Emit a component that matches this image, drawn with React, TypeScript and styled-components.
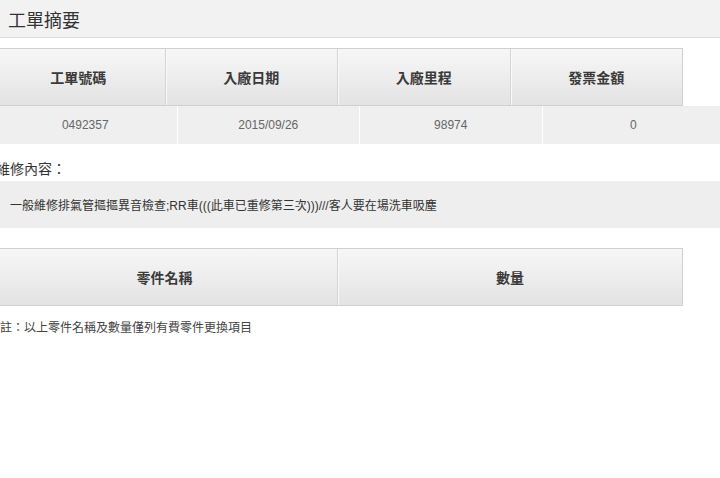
import React from "react";
import styled, { createGlobalStyle } from "styled-components";

const Global = createGlobalStyle`
  html, body { margin: 0; padding: 0; background: #fff; }
  body { font-family: "Liberation Sans", Arial, "Noto Sans CJK TC", sans-serif; color: #333; overflow: hidden; }
`;

const Page = styled.div`
  width: 720px;
  height: 478px;
  overflow: hidden;
  display: flex;
  flex-direction: column;
`;

const TitleBar = styled.div`
  height: 37px;
  background: #f2f2f2;
  border-bottom: 1px solid #dcdcdc;
  display: flex;
  align-items: center;
  padding-left: 8px;
  font-size: 18px;
  color: #333;
  font-family: "Noto Sans CJK TC", sans-serif;
  margin-bottom: 10px;
`;

const HeadRow = styled.div<{ cols: number; w: number }>`
  display: grid;
  grid-template-columns: repeat(${(p) => p.cols}, 1fr);
  width: ${(p) => p.w}px;
  margin-left: -8px;
  height: 58px;
  border: 1px solid #d0d0d0;
  border-left: none;
  box-sizing: border-box;
  background: linear-gradient(#f7f7f7, #e3e3e3);
`;

const HeadCell = styled.div`
  display: flex;
  align-items: center;
  justify-content: center;
  font-weight: bold;
  font-size: 14px;
  color: #3a3a3a;
  font-family: "Noto Sans CJK TC", sans-serif;
  & + & { border-left: 1px solid #d4d4d4; box-shadow: inset 1px 0 0 #fafafa; }
`;

const DataRow = styled.div`
  display: grid;
  grid-template-columns: repeat(4, 1fr);
  width: 730px;
  margin-left: -6px;
  height: 38px;
`;

const DataCell = styled.div`
  display: flex;
  align-items: center;
  justify-content: center;
  background: #efefef;
  font-size: 12px;
  color: #666;
  & + & { border-left: 1px solid #fff; }
`;

const Label = styled.div`
  margin: 14px 0 0 -4px;
  font-size: 14px;
  color: #333;
  font-family: "Noto Sans CJK TC", sans-serif;
  height: 20px;
  line-height: 20px;
`;

const ContentBox = styled.div`
  margin-top: 3px;
  height: 47px;
  background: #eeeeee;
  display: flex;
  align-items: center;
  padding-left: 10px;
  font-size: 12px;
  color: #333;
  font-family: "Liberation Sans", "Noto Sans CJK TC", sans-serif;
  margin-bottom: 20px;
`;

const Note = styled.div`
  margin-top: 12px;
  font-size: 12px;
  color: #444;
  font-family: "Noto Sans CJK TC", sans-serif;
`;

export default function App() {
  return (
    <Page>
      <Global />
      <TitleBar>工單摘要</TitleBar>
      <HeadRow cols={4} w={691}>
        <HeadCell>工單號碼</HeadCell>
        <HeadCell>入廠日期</HeadCell>
        <HeadCell>入廠里程</HeadCell>
        <HeadCell>發票金額</HeadCell>
      </HeadRow>
      <DataRow>
        <DataCell>0492357</DataCell>
        <DataCell>2015/09/26</DataCell>
        <DataCell>98974</DataCell>
        <DataCell>0</DataCell>
      </DataRow>
      <Label>維修內容：</Label>
      <ContentBox>一般維修排氣管摳摳異音檢查;RR車(((此車已重修第三次)))///客人要在場洗車吸塵</ContentBox>
      <HeadRow cols={2} w={691}>
        <HeadCell>零件名稱</HeadCell>
        <HeadCell>數量</HeadCell>
      </HeadRow>
      <Note>註：以上零件名稱及數量僅列有費零件更換項目</Note>
    </Page>
  );
}
